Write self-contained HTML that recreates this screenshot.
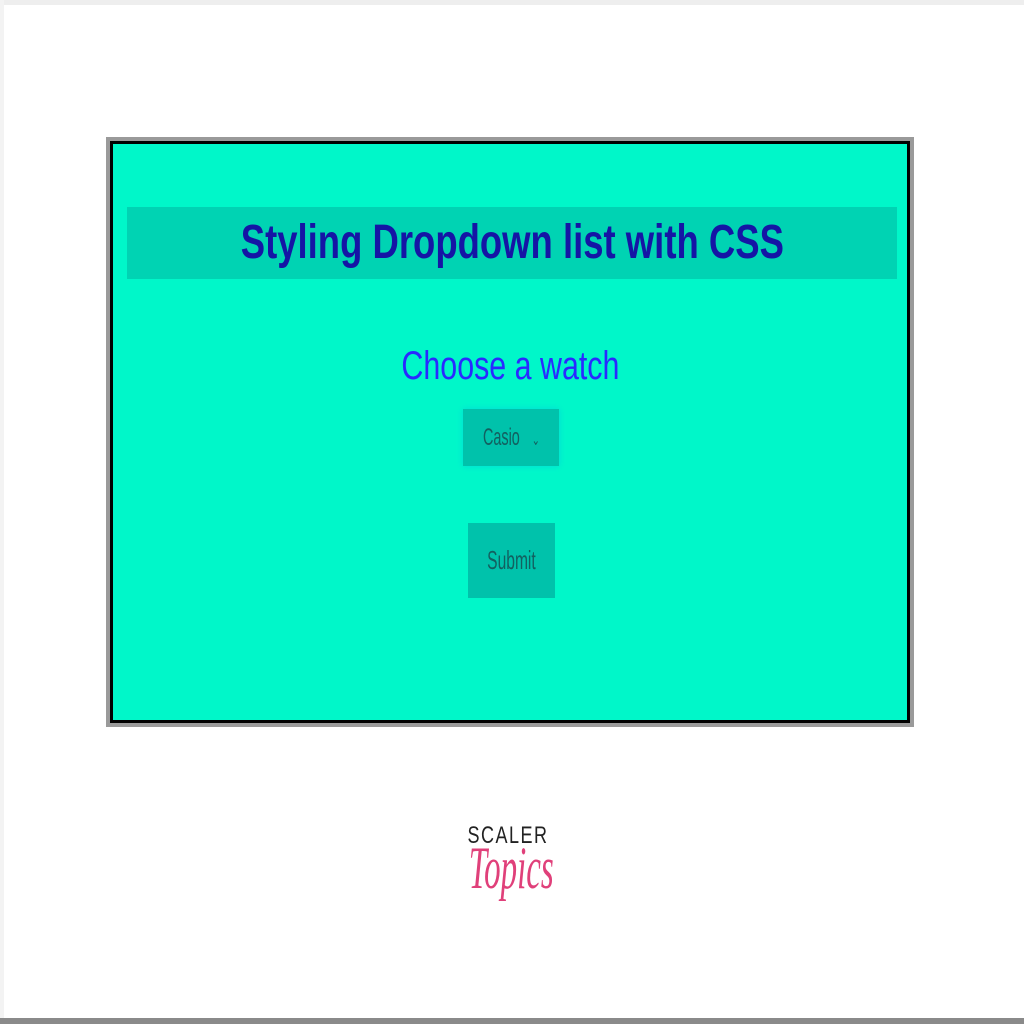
<!DOCTYPE html>
<html><head><style>
*{margin:0;padding:0;box-sizing:border-box}
body{width:1024px;height:1024px;background:#fff;position:relative;overflow:hidden;font-family:"Liberation Sans",sans-serif}
.top{position:absolute;left:0;top:0;width:1024px;height:5px;background:#eee}
.left{position:absolute;left:0;top:0;width:4px;height:1024px;background:#f3f3f3}
.bot{position:absolute;left:0;top:1018px;width:1024px;height:6px;background:#8a8a8a}
.box{position:absolute;left:106px;top:137px;width:808px;height:590px;background:#9a9a9a;padding:4px}
.in{width:100%;height:100%;border:3px solid #000;background:#00f7c9;position:relative}
.hd{position:absolute;left:14px;top:63px;width:770px;height:72px;background:#00d3b3;color:#1515a5;font-weight:bold;font-size:48px;text-align:center;line-height:72px;white-space:nowrap}
.sx{display:inline-block;transform:scaleX(0.76);transform-origin:center}
.ch{position:absolute;left:0;width:100%;top:200px;text-align:center;color:#2a2aff;font-size:40px;white-space:nowrap}
.sel{position:absolute;left:350px;top:265px;width:96px;height:57px;background:#00c2ab;box-shadow:0 0 6px #00d8d8;color:#126060;font-size:24px;line-height:57px;white-space:nowrap;text-align:center}
.sub{position:absolute;left:355px;top:379px;width:87px;height:75px;background:#00c2ab;color:#126060;font-size:26px;line-height:75px;text-align:center;white-space:nowrap}
.logo{position:absolute;left:462px;top:822px;width:100px;text-align:center;white-space:nowrap}
</style></head><body>
<div class="top"></div><div class="left"></div><div class="bot"></div>
<div class="box"><div class="in">
<div class="hd"><span class="sx">Styling Dropdown list with CSS</span></div>
<div class="ch"><span class="sx">Choose a watch</span></div>
<div class="sel"><span class="sx" style="transform:scaleX(0.6)">Casio &nbsp;&nbsp;<span style="font-size:16px">⌄</span></span></div>
<div class="sub"><span class="sx" style="transform:scaleX(0.6)">Submit</span></div>
</div></div>
<div class="logo">
<div style="font-size:24px;color:#222;letter-spacing:2px;margin-left:-8px"><span class="sx" style="transform:scaleX(0.75)">SCALER</span></div>
<div style="font-size:60px;color:#e0407a;font-style:italic;font-family:'Liberation Serif',serif;margin-top:-16px;margin-left:-28px"><span class="sx" style="transform:scaleX(0.55)">Topics</span></div>
</div>
</body></html>
